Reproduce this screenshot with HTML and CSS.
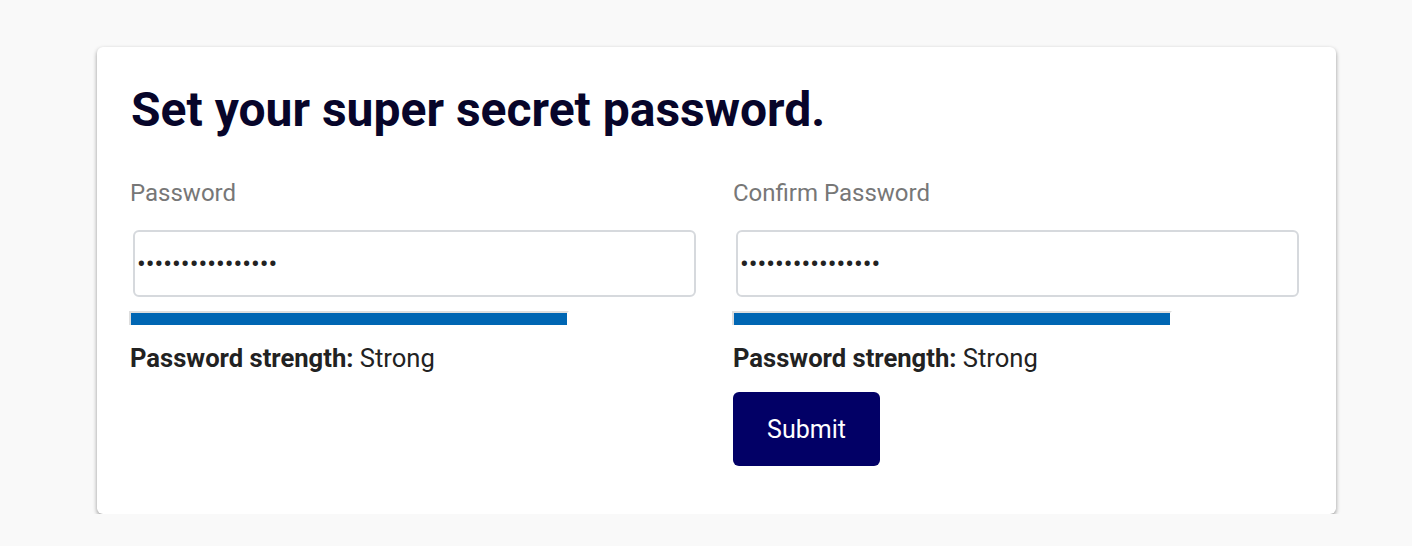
FILE: index.html
```html
<!DOCTYPE html>
<html lang="en">
<head>
<meta charset="utf-8">
<title>Set password</title>
<link rel="stylesheet" href="styles.css">
</head>
<body>
<main class="card">
  <h1 class="title">Set your super secret password.</h1>
  <form class="grid">
    <div class="field">
      <label class="label" for="pw">Password</label>
      <input class="input" id="pw" type="password" value="aaaaaaaaaaaaaaaa">
      <div class="meter"><div class="meter-fill"></div></div>
      <p class="strength"><b>Password strength:</b> Strong</p>
    </div>
    <div class="field">
      <label class="label" for="pw2">Confirm Password</label>
      <input class="input" id="pw2" type="password" value="aaaaaaaaaaaaaaaa">
      <div class="meter"><div class="meter-fill"></div></div>
      <p class="strength"><b>Password strength:</b> Strong</p>
      <button class="submit" type="button">Submit</button>
    </div>
  </form>
</main>
</body>
</html>
```

FILE: styles.css
```css
* { box-sizing: border-box; }
html, body { margin: 0; padding: 0; }
body {
  background: #f9f9f9;
  font-family: Roboto, "Noto Sans", sans-serif;
  color: #222;
}
.card {
  margin: 47px 0 0 97px;
  width: 1239px;
  height: 467px;
  background: #fff;
  border-radius: 6px;
  box-shadow: 0 2px 4px rgba(0,0,0,0.4);
  padding: 30px 33px 48px 33px;
}
.title {
  margin: 0;
  padding-left: 1px;
  font-size: 48px;
  line-height: 66px;
  font-weight: 700;
  color: #07052a;
}
.grid {
  display: grid;
  grid-template-columns: 570px 570px;
  column-gap: 33px;
  margin-top: 35px;
}
.field { display: flex; flex-direction: column; align-items: flex-start; }
.label {
  font-size: 24px;
  line-height: 30px;
  color: #777;
}
.input {
  margin: 22px 0 0 3px;
  width: 563px;
  height: 67px;
  border: 2px solid #d6d9dd;
  border-radius: 6px;
  padding: 0 2px;
  font-family: Roboto, sans-serif;
  font-size: 26px;
  color: #222;
  background: #fff;
  outline: none;
}
.meter {
  margin: 14px 0 0 -1px;
  width: 440px;
  height: 14px;
  border-top: 2px solid #dedede;
  border-left: 2px solid #dedede;
  border-right: 2px solid #fff;
  background: #fff;
}
.meter-fill { height: 100%; width: 100%; background: #0066b3; }
.strength {
  margin: 19px 0 0 0;
  font-size: 25.6px;
  line-height: 28px;
  color: #222;
}
.strength b { font-weight: 700; }
.submit {
  margin-top: 20px;
  width: 147px;
  height: 74px;
  border: none;
  border-radius: 6px;
  background: #020066;
  color: #fff;
  font-family: Roboto, sans-serif;
  font-size: 25px;
  cursor: pointer;
}
```
